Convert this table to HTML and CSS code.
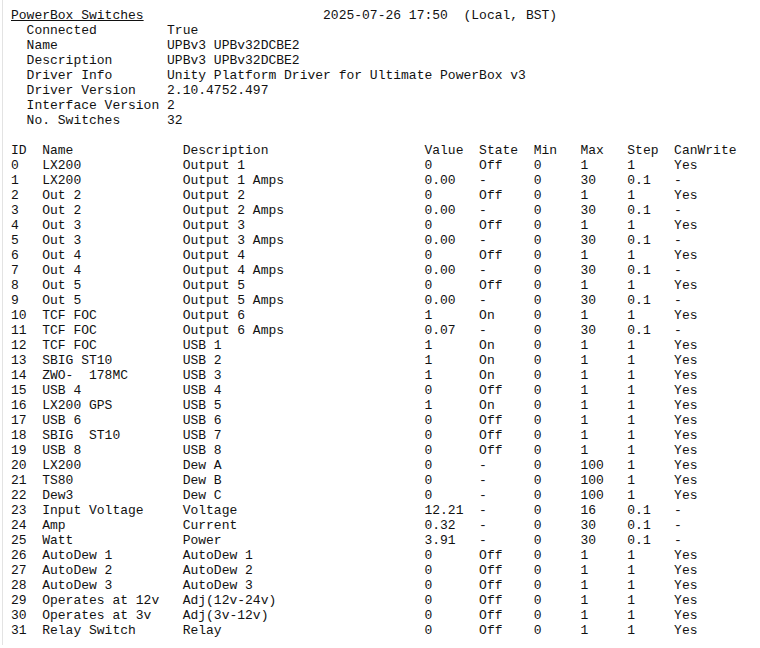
FILE: index.html
```html
<!DOCTYPE html>
<html>
<head>
<meta charset="utf-8">
<link rel="stylesheet" href="styles.css">
</head>
<body>
<div class="page">
<pre class="dump"><span class="title">PowerBox Switches</span>                       2025-07-26 17:50  (Local, BST)
  Connected         True
  Name              UPBv3 UPBv32DCBE2
  Description       UPBv3 UPBv32DCBE2
  Driver Info       Unity Platform Driver for Ultimate PowerBox v3
  Driver Version    2.10.4752.497
  Interface Version 2
  No. Switches      32

ID  Name              Description                    Value  State  Min   Max   Step  CanWrite
0   LX200             Output 1                       0      Off    0     1     1     Yes
1   LX200             Output 1 Amps                  0.00   -      0     30    0.1   -
2   Out 2             Output 2                       0      Off    0     1     1     Yes
3   Out 2             Output 2 Amps                  0.00   -      0     30    0.1   -
4   Out 3             Output 3                       0      Off    0     1     1     Yes
5   Out 3             Output 3 Amps                  0.00   -      0     30    0.1   -
6   Out 4             Output 4                       0      Off    0     1     1     Yes
7   Out 4             Output 4 Amps                  0.00   -      0     30    0.1   -
8   Out 5             Output 5                       0      Off    0     1     1     Yes
9   Out 5             Output 5 Amps                  0.00   -      0     30    0.1   -
10  TCF FOC           Output 6                       1      On     0     1     1     Yes
11  TCF FOC           Output 6 Amps                  0.07   -      0     30    0.1   -
12  TCF FOC           USB 1                          1      On     0     1     1     Yes
13  SBIG ST10         USB 2                          1      On     0     1     1     Yes
14  ZWO-  178MC       USB 3                          1      On     0     1     1     Yes
15  USB 4             USB 4                          0      Off    0     1     1     Yes
16  LX200 GPS         USB 5                          1      On     0     1     1     Yes
17  USB 6             USB 6                          0      Off    0     1     1     Yes
18  SBIG  ST10        USB 7                          0      Off    0     1     1     Yes
19  USB 8             USB 8                          0      Off    0     1     1     Yes
20  LX200             Dew A                          0      -      0     100   1     Yes
21  TS80              Dew B                          0      -      0     100   1     Yes
22  Dew3              Dew C                          0      -      0     100   1     Yes
23  Input Voltage     Voltage                        12.21  -      0     16    0.1   -
24  Amp               Current                        0.32   -      0     30    0.1   -
25  Watt              Power                          3.91   -      0     30    0.1   -
26  AutoDew 1         AutoDew 1                      0      Off    0     1     1     Yes
27  AutoDew 2         AutoDew 2                      0      Off    0     1     1     Yes
28  AutoDew 3         AutoDew 3                      0      Off    0     1     1     Yes
29  Operates at 12v   Adj(12v-24v)                   0      Off    0     1     1     Yes
30  Operates at 3v    Adj(3v-12v)                    0      Off    0     1     1     Yes
31  Relay Switch      Relay                          0      Off    0     1     1     Yes</pre>
</div>
</body>
</html>
```
FILE: styles.css
```css
html, body {
  margin: 0;
  padding: 0;
  background: #ffffff;
}
.page {
  margin-left: 2px;
  border-left: 1px solid #e3e3e3;
  padding: 8px 0 0 8px;
  height: 637px;
}
.dump {
  margin: 0;
  font-family: "Liberation Mono", "Courier New", monospace;
  font-size: 13px;
  line-height: 15px;
  color: #111111;
}
.title {
  text-decoration: underline;
}
```
